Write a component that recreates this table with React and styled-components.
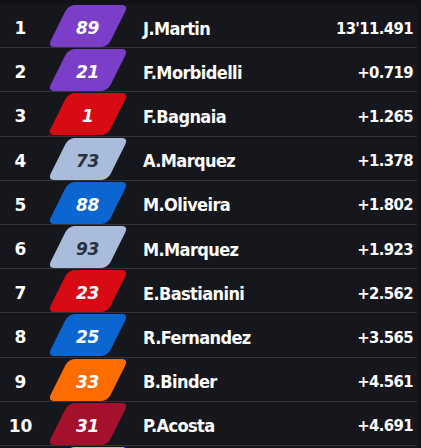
import React from "react";
import styled, { createGlobalStyle } from "styled-components";

const Global = createGlobalStyle`
  html, body { margin: 0; padding: 0; background: #16171c; }
  body { font-family: "DejaVu Sans Condensed", "DejaVu Sans", sans-serif; overflow: hidden; }
`;

const Frame = styled.div`
  display: flex;
  width: 421px;
  height: 448px;
  overflow: hidden;
  background: #16171c;
`;

const List = styled.div`
  flex: 1;
  display: flex;
  flex-direction: column;
  padding-top: 4px;
  background: linear-gradient(#111216 0 4px, transparent 4px);
`;

const Track = styled.div`
  width: 4px;
  background: #111216;
`;

const Row = styled.div`
  display: grid;
  grid-template-columns: 40px 103px 1fr auto;
  align-items: center;
  height: 43.2px;
  flex: none;
  border-bottom: 1px solid #34353b;
  padding-right: 4px;
  color: #ffffff;
`;

const Text = styled.div`
  padding-top: 5px;
  font-weight: 700;
`;

const Pos = styled(Text)`
  text-align: center;
  font-family: "DejaVu Sans", sans-serif;
  font-size: 17px;
  padding-left: 1px;
`;

const BadgeCell = styled.div`
  height: 100%;
  display: flex;
  align-items: center;
`;

const Badge = styled.div`
  margin-left: 17.5px;
  width: 60px;
  height: 42px;
  margin-top: 1px;
  border-radius: 6px;
  background: ${(p) => p.$bg};
  transform: skewX(-26.5deg);
  display: flex;
  align-items: center;
  justify-content: center;
`;

const Num = styled.span`
  padding-top: 4px;
  transform: skewX(26.5deg);
  font-family: "DejaVu Sans", sans-serif;
  font-weight: 700;
  font-style: italic;
  font-size: 17px;
  color: ${(p) => p.$fg};
  letter-spacing: -0.3px;
`;

const Name = styled(Text)`
  font-size: 18px;
  letter-spacing: -0.6px;
`;

const Time = styled(Text)`
  font-size: 16.5px;
  letter-spacing: -0.6px;
  text-align: right;
`;

const riders = [
  [1, "89", "J.Martin", "13'11.491", "#7b3ec8", "#fff"],
  [2, "21", "F.Morbidelli", "+0.719", "#7b3ec8", "#fff"],
  [3, "1", "F.Bagnaia", "+1.265", "#d80b14", "#fff"],
  [4, "73", "A.Marquez", "+1.378", "#a9bcdb", "#2a3040"],
  [5, "88", "M.Oliveira", "+1.802", "#0b66d2", "#fff"],
  [6, "93", "M.Marquez", "+1.923", "#a9bcdb", "#2a3040"],
  [7, "23", "E.Bastianini", "+2.562", "#d80b14", "#fff"],
  [8, "25", "R.Fernandez", "+3.565", "#0b66d2", "#fff"],
  [9, "33", "B.Binder", "+4.561", "#ff6c00", "#fff"],
  [10, "31", "P.Acosta", "+4.691", "#a5102c", "#fff"],
  [11, "", "", "", "#c4d42c", "#fff"],
];

export default function App() {
  return (
    <>
      <Global />
      <Frame>
        <List>
          {riders.map(([pos, num, name, time, bg, fg]) => (
            <Row key={pos}>
              <Pos>{pos <= 10 ? pos : ""}</Pos>
              <BadgeCell>
                <Badge $bg={bg}>
                  <Num $fg={fg}>{num}</Num>
                </Badge>
              </BadgeCell>
              <Name>{name}</Name>
              <Time>{time}</Time>
            </Row>
          ))}
        </List>
        <Track />
      </Frame>
    </>
  );
}
